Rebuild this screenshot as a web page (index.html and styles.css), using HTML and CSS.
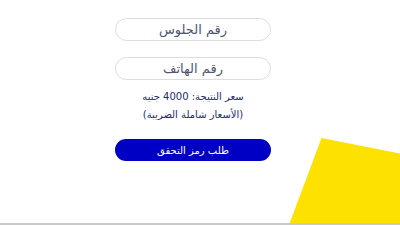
FILE: index.html
```html
<!DOCTYPE html>
<html lang="ar" dir="rtl">
<head>
<meta charset="utf-8">
<link rel="stylesheet" href="styles.css">
</head>
<body>
<div class="page">
  <svg class="shape" width="400" height="225" viewBox="0 0 400 225" aria-hidden="true">
    <polygon points="321.5,138 400,153.5 400,225 289,225" fill="#fde100"/>
  </svg>
  <form class="form">
    <input class="field" type="text" placeholder="رقم الجلوس">
    <input class="field" type="text" placeholder="رقم الهاتف">
    <div class="price">
      <p>سعر النتيجة: 4000 جنيه</p>
      <p>(الأسعار شاملة الضريبة)</p>
    </div>
    <button class="btn" type="button">طلب رمز التحقق</button>
  </form>
</div>
</body>
</html>
```

FILE: styles.css
```css
* { box-sizing: border-box; }
html, body { margin: 0; padding: 0; background: #fff; }
body { font-family: "DejaVu Sans", "Noto Sans", sans-serif; }
.page {
  position: relative;
  width: 400px;
  height: 225px;
  overflow: hidden;
  border-bottom: 2px solid #c9c9c9;
  direction: ltr;
}
.shape { position: absolute; left: 0; top: 0; }
.form {
  position: relative;
  width: 156px;
  margin-left: 115px;
  padding-top: 18px;
  display: flex;
  flex-direction: column;
  direction: rtl;
}
.field {
  height: 23px;
  border: 1px solid #dcdde3;
  border-radius: 12px;
  background: #fff;
  text-align: center;
  font-family: inherit;
  font-size: 13px;
  color: #4a4f66;
  outline: none;
  margin-bottom: 16px;
  padding: 0 4px;
}
.field::placeholder { color: #4f5470; opacity: 1; }
.field + .field { margin-bottom: 8px; }
.price {
  text-align: center;
  color: #232a6b;
  font-size: 10px;
  line-height: 18px;
}
.price p { margin: 0; }
.btn {
  margin-top: 15px;
  height: 22px;
  border: none;
  border-radius: 11px;
  background: #0000c4;
  color: #fff;
  font-family: inherit;
  font-size: 10px;
}
```
